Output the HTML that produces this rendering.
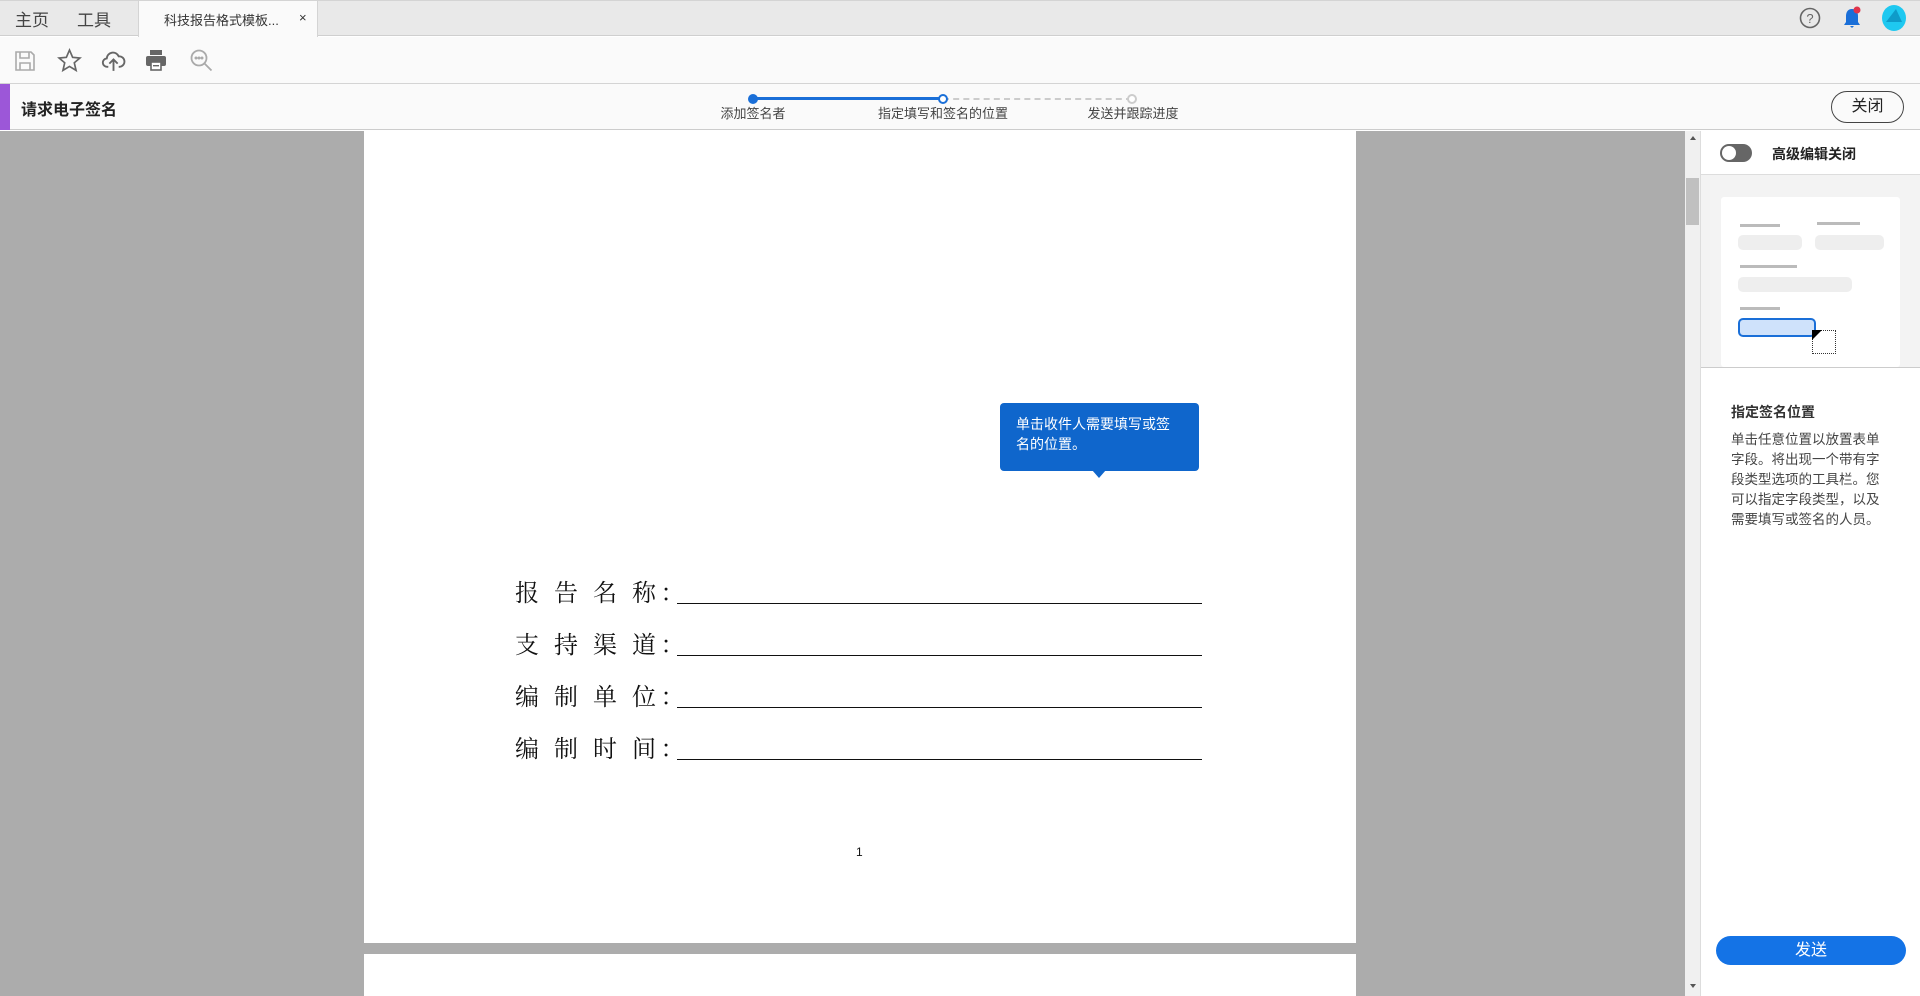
<!DOCTYPE html>
<html><head><meta charset="utf-8"><style>
*{margin:0;padding:0;box-sizing:border-box}
body{width:1920px;height:996px;overflow:hidden;font-family:"Liberation Sans","Noto Sans CJK SC",sans-serif;background:#fff;position:relative;color:#333}
.abs{position:absolute}
</style></head><body>
<!-- tab bar -->
<div class="abs" style="left:0;top:0;width:1920px;height:36px;background:#e9e9e9;border-top:1px solid #d4d4d4;border-bottom:1px solid #cfcfcf"></div>
<div class="abs" style="left:15px;top:6px;font-size:17px;color:#444">主页</div>
<div class="abs" style="left:77px;top:6px;font-size:17px;color:#444">工具</div>
<div class="abs" style="left:138px;top:1px;width:180px;height:36px;background:#fafafa;border-left:1px solid #d4d4d4;border-right:1px solid #d4d4d4"></div>
<div class="abs" style="left:164px;top:10px;font-size:13px;color:#333">科技报告格式模板...</div>
<div class="abs" style="left:299px;top:10px;font-size:13px;color:#333">×</div>
<svg class="abs" style="left:1798px;top:6px" width="24" height="24" viewBox="0 0 24 24"><circle cx="12" cy="12" r="9.5" fill="none" stroke="#666" stroke-width="1.6"/><text x="12" y="17" font-size="13" text-anchor="middle" fill="#666" font-family="Liberation Sans">?</text></svg>
<svg class="abs" style="left:1840px;top:5px" width="24" height="26" viewBox="0 0 24 26"><path d="M12 4c-4 0-6 3-6 7v6l-2 3h16l-2-3v-6c0-4-2-7-6-7z" fill="#1a6fd8"/><path d="M10 21h4l-2 2z" fill="#1a6fd8"/><circle cx="17" cy="5" r="3.5" fill="#e0344a"/></svg>
<svg class="abs" style="left:1880px;top:4px" width="28" height="28" viewBox="0 0 28 28"><ellipse cx="14" cy="14" rx="12" ry="13" fill="#1ec8f0"/><path d="M6 18L16 5L22 18z" fill="#0e9bc9"/></svg>
<!-- toolbar -->
<div class="abs" style="left:0;top:37px;width:1920px;height:47px;background:#fafafa;border-bottom:1px solid #d4d4d4"></div>
<svg class="abs" style="left:13px;top:49px" width="24" height="24" viewBox="0 0 24 24" fill="none" stroke="#aaa" stroke-width="1.6"><path d="M3 3h15l3 3v15H3z"/><path d="M7 3v6h9V3"/><path d="M7 21v-7h10v7"/></svg>
<svg class="abs" style="left:57px;top:48px" width="25" height="25" viewBox="0 0 24 24" fill="none" stroke="#666" stroke-width="1.6"><path d="M12 2l3 7 7 .6-5.4 4.6 1.7 7.3L12 17.7 5.7 21.5l1.7-7.3L2 9.6 9 9z"/></svg>
<svg class="abs" style="left:101px;top:48px" width="25" height="25" viewBox="0 0 24 24" fill="none" stroke="#666" stroke-width="1.8"><path d="M7 18H6a4 4 0 0 1-.5-8A6 6 0 0 1 17 8a4.5 4.5 0 0 1 1 10h-1"/><path d="M12 22V11M8 15l4-4 4 4"/></svg>
<svg class="abs" style="left:144px;top:48px" width="24" height="24" viewBox="0 0 24 24" fill="#666"><rect x="6" y="2" width="12" height="5"/><rect x="2" y="8" width="20" height="10" rx="2"/><rect x="7" y="14" width="10" height="8" fill="#fff" stroke="#666" stroke-width="1.6"/><rect x="9" y="17" width="6" height="1.4"/></svg>
<svg class="abs" style="left:189px;top:48px" width="26" height="26" viewBox="0 0 26 26" fill="none" stroke="#aaa" stroke-width="1.8"><circle cx="10" cy="10" r="7.5"/><path d="M15.5 15.5l7 7"/><circle cx="7" cy="10" r=".6" fill="#aaa"/><circle cx="10" cy="10" r=".6" fill="#aaa"/><circle cx="13" cy="10" r=".6" fill="#aaa"/></svg>
<!-- sign bar -->
<div class="abs" style="left:0;top:84px;width:1920px;height:46px;background:#fafafa;border-bottom:1px solid #ccc"></div>
<div class="abs" style="left:0;top:84px;width:10px;height:46px;background:#9c57d8"></div>
<div class="abs" style="left:21px;top:96px;font-size:16px;color:#222;font-weight:bold">请求电子签名</div>
<div class="abs" style="left:753px;top:97px;width:190px;height:3px;background:#1a6fd8"></div>
<div class="abs" style="left:943px;top:98px;width:189px;border-top:2px dashed #ccc"></div>
<div class="abs" style="left:748px;top:94px;width:10px;height:10px;border-radius:50%;background:#1a6fd8"></div>
<div class="abs" style="left:938px;top:94px;width:10px;height:10px;border-radius:50%;background:#fff;border:2px solid #1a6fd8"></div>
<div class="abs" style="left:1127px;top:94px;width:10px;height:10px;border-radius:50%;background:#fff;border:2px solid #ccc"></div>
<div class="abs" style="left:693px;top:103px;width:120px;text-align:center;font-size:13px;color:#444">添加签名者</div>
<div class="abs" style="left:863px;top:103px;width:160px;text-align:center;font-size:13px;color:#444">指定填写和签名的位置</div>
<div class="abs" style="left:1063px;top:103px;width:140px;text-align:center;font-size:13px;color:#444">发送并跟踪进度</div>
<div class="abs" style="left:1831px;top:91px;width:73px;height:32px;border:1.5px solid #444;border-radius:16px;text-align:center;line-height:29px;font-size:16px;color:#222">关闭</div>
<!-- doc area -->
<div class="abs" style="left:0;top:131px;width:1685px;height:865px;background:#acacac"></div>
<div class="abs" style="left:364px;top:131px;width:992px;height:812px;background:#fff"></div>
<div class="abs" style="left:364px;top:954px;width:992px;height:42px;background:#fff"></div>
<div class="abs" style="left:1000px;top:403px;width:199px;height:68px;background:#0f66cc;border-radius:4px"></div>
<div class="abs" style="left:1092px;top:470px;width:0;height:0;border-left:7px solid transparent;border-right:7px solid transparent;border-top:8px solid #0f66cc"></div>
<div class="abs" style="left:1016px;top:414px;width:158px;font-size:14px;line-height:20px;color:#fff">单击收件人需要填写或签名的位置。</div>
<div class="abs" style="left:515px;top:568px;font-family:'Liberation Serif','Noto Serif CJK SC',serif;font-size:24px;line-height:52px;color:#111;letter-spacing:4.5px">
<div>报 告 名 称：</div><div>支 持 渠 道：</div><div>编 制 单 位：</div><div>编 制 时 间：</div></div>
<div class="abs" style="left:677px;top:603px;width:525px;border-top:1.5px solid #111"></div>
<div class="abs" style="left:677px;top:655px;width:525px;border-top:1.5px solid #111"></div>
<div class="abs" style="left:677px;top:707px;width:525px;border-top:1.5px solid #111"></div>
<div class="abs" style="left:677px;top:759px;width:525px;border-top:1.5px solid #111"></div>
<div class="abs" style="left:856px;top:845px;font-size:12px;color:#111">1</div>
<!-- scrollbar -->
<div class="abs" style="left:1685px;top:131px;width:15px;height:865px;background:#f0f0f0"></div>
<div class="abs" style="left:1690px;top:136px;width:0;height:0;border-left:3.5px solid transparent;border-right:3.5px solid transparent;border-bottom:4px solid #555"></div>
<div class="abs" style="left:1690px;top:984px;width:0;height:0;border-left:3.5px solid transparent;border-right:3.5px solid transparent;border-top:4px solid #555"></div>
<div class="abs" style="left:1686px;top:178px;width:13px;height:47px;background:#c0c0c0"></div>
<!-- right panel -->
<div class="abs" style="left:1700px;top:131px;width:220px;height:865px;background:#fff;border-left:1px solid #ddd"></div>
<div class="abs" style="left:1720px;top:144px;width:32px;height:18px;border-radius:9px;background:#666"></div>
<div class="abs" style="left:1722px;top:146px;width:14px;height:14px;border-radius:50%;background:#fff"></div>
<div class="abs" style="left:1772px;top:144px;font-size:14px;color:#222;font-weight:bold">高级编辑关闭</div>
<div class="abs" style="left:1701px;top:174px;width:219px;height:194px;background:#f3f3f3;border-top:1px solid #ddd;border-bottom:1px solid #ccc"></div>
<div class="abs" style="left:1721px;top:197px;width:179px;height:170px;background:#fff;border-radius:3px"></div>
<div class="abs" style="left:1740px;top:224px;width:40px;height:3px;background:#bbb"></div>
<div class="abs" style="left:1817px;top:222px;width:43px;height:3px;background:#bbb"></div>
<div class="abs" style="left:1738px;top:235px;width:64px;height:15px;background:#eee;border-radius:5px"></div>
<div class="abs" style="left:1815px;top:235px;width:69px;height:15px;background:#eee;border-radius:5px"></div>
<div class="abs" style="left:1740px;top:265px;width:57px;height:3px;background:#bbb"></div>
<div class="abs" style="left:1738px;top:277px;width:114px;height:15px;background:#eee;border-radius:5px"></div>
<div class="abs" style="left:1740px;top:307px;width:40px;height:3px;background:#bbb"></div>
<div class="abs" style="left:1738px;top:318px;width:78px;height:19px;background:#cfe2fb;border:2px solid #1a6fd8;border-radius:5px"></div>
<div class="abs" style="left:1812px;top:330px;width:24px;height:24px;border:1px dotted #333"></div>
<div class="abs" style="left:1812px;top:330px;width:0;height:0;border-top:10px solid #000;border-right:10px solid transparent"></div>
<div class="abs" style="left:1731px;top:402px;font-size:14px;font-weight:bold;color:#333">指定签名位置</div>
<div class="abs" style="left:1731px;top:430px;width:160px;font-size:13.5px;line-height:20px;color:#444">单击任意位置以放置表单字段。将出现一个带有字段类型选项的工具栏。您可以指定字段类型，以及需要填写或签名的人员。</div>
<div class="abs" style="left:1716px;top:936px;width:190px;height:29px;border-radius:15px;background:#1473e6;color:#fff;text-align:center;line-height:29px;font-size:16px">发送</div>
</body></html>
